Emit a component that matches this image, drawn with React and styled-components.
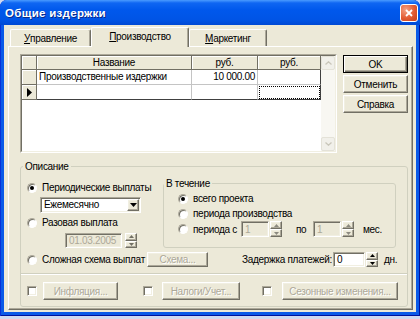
import React from "react";
import styled, { createGlobalStyle, css } from "styled-components";

const tabs = [
  { key: "У", rest: "правление", width: 81 },
  { key: "П", rest: "роизводство", width: 98, active: true },
  { key: "М", rest: "аркетинг", width: 78 },
];

const columns = [
  { title: "Название", align: "left" },
  { title: "руб.", align: "right" },
  { title: "руб.", align: "right" },
];

const rows = [
  { cells: ["Производственные издержки", "10 000.00", ""] },
  { cells: ["", "", ""], current: true },
];

const extras = [
  { label: "Инфляция...", offset: 0, gap: 6, width: 75 },
  { label: "Налоги/Учет...", offset: 25, gap: 9, width: 78 },
  { label: "Сезонные изменения...", offset: 22, gap: 10, width: 116 },
];

const Arrow = ({ up, color = "#000", w = 5, h = 3 }) => (
  <svg width={w} height={h} viewBox={`0 0 ${w} ${h}`}>
    <path d={up ? `M${w / 2} 0L${w} ${h}H0z` : `M0 0H${w}L${w / 2} ${h}z`} fill={color} />
  </svg>
);

const Spin = ({ color, height = 15 }) => (
  <SpinBox $height={height}>
    <SpinButton>
      <Arrow up color={color} />
    </SpinButton>
    <SpinButton>
      <Arrow color={color} />
    </SpinButton>
  </SpinBox>
);

const Option = ({ checked, children, indent, height }) => (
  <OptionRow $indent={indent} $height={height}>
    <RadioMark $checked={checked} />
    {children}
  </OptionRow>
);

const App = () => {
  return (
    <>
      <GlobalStyle />
      <Window>
        <TitleBar>
          <Title>Общие издержки</Title>
          <CloseButton>
            <svg width="8" height="8" viewBox="0 0 8 8">
              <path d="M1 1L7 7M7 1L1 7" stroke="#fff" strokeWidth="1.8" />
            </svg>
          </CloseButton>
        </TitleBar>
        <Client>
          <TabRow>
            {tabs.map((tab) => (
              <Tab key={tab.key} $width={tab.width} $active={tab.active}>
                <u>{tab.key}</u>
                {tab.rest}
              </Tab>
            ))}
          </TabRow>
          <TabPanel>
            <TopSection>
              <GridOuter>
                <GridInner>
                  <Table>
                    <HeadCell />
                    {columns.map((col, i) => (
                      <HeadCell key={i}>{col.title}</HeadCell>
                    ))}
                    {rows.map((row, r) => (
                      <React.Fragment key={r}>
                        <HeadCell>
                          {row.current && (
                            <svg width="5" height="9" viewBox="0 0 5 9">
                              <path d="M0 0L5 4.5L0 9z" fill="#000" />
                            </svg>
                          )}
                        </HeadCell>
                        {row.cells.map((value, c) => (
                          <DataCell
                            key={c}
                            $align={columns[c].align}
                            $lastRow={r === rows.length - 1}
                            $lastCol={c === row.cells.length - 1}
                            $focus={row.current && c === row.cells.length - 1}
                          >
                            {value}
                          </DataCell>
                        ))}
                      </React.Fragment>
                    ))}
                  </Table>
                  <ScrollBar>
                    <ScrollButton>
                      <svg width="7" height="4" viewBox="0 0 7 4">
                        <path d="M0.5 3.5L3.5 0.8L6.5 3.5" stroke="#c9c6ba" strokeWidth="1.3" fill="none" />
                      </svg>
                    </ScrollButton>
                    <ScrollButton>
                      <svg width="7" height="4" viewBox="0 0 7 4">
                        <path d="M0.5 0.5L3.5 3.2L6.5 0.5" stroke="#c9c6ba" strokeWidth="1.3" fill="none" />
                      </svg>
                    </ScrollButton>
                  </ScrollBar>
                </GridInner>
              </GridOuter>
              <ButtonColumn>
                <PushButton $default>OK</PushButton>
                <PushButton>Отменить</PushButton>
                <PushButton>Справка</PushButton>
              </ButtonColumn>
            </TopSection>

            <GroupBox>
              <Legend $offset={2}>Описание</Legend>
              <GroupRow>
                <LeftColumn>
                  <Option checked indent={6}>
                    Периодические выплаты
                  </Option>
                  <Combo>
                    <ComboText>Ежемесячно</ComboText>
                    <ComboButton>
                      <Arrow w={7} h={4} />
                    </ComboButton>
                  </Combo>
                  <Option indent={6}>Разовая выплата</Option>
                  <DateRow>
                    <Field $width={57} $disabled>
                      01.03.2005
                    </Field>
                    <Spin color="#716f64" />
                  </DateRow>
                </LeftColumn>
                <InnerGroup>
                  <Legend $offset={0}>В течение</Legend>
                  <Option checked indent={14}>
                    всего проекта
                  </Option>
                  <Option indent={14}>периода производства</Option>
                  <Option indent={14} height={16}>
                    <Label $width={48}>периода с</Label>
                    <Field $width={28} $disabled>
                      1
                    </Field>
                    <Spin color="#8c8a80" height={16} />
                    <Label $width={17} $gap={14}>
                      по
                    </Label>
                    <Field $width={28} $disabled>
                      1
                    </Field>
                    <Spin color="#8c8a80" height={16} />
                    <Label $gap={9}>мес.</Label>
                  </Option>
                </InnerGroup>
              </GroupRow>

              <BottomRow>
                <RadioMark />
                <Label $width={105}>Сложная схема выплат</Label>
                <PushButton $width={61} $height={15} $disabled>
                  Схема...
                </PushButton>
                <Label $width={91} $gap={34}>
                  Задержка платежей:
                </Label>
                <Field $width={32}>0</Field>
                <Spin />
                <Label $gap={6}>дн.</Label>
              </BottomRow>

              <Divider />

              <CheckRow>
                {extras.map((item) => (
                  <CheckItem key={item.label} $offset={item.offset} $gap={item.gap}>
                    <CheckMark />
                    <PushButton $width={item.width} $disabled>
                      {item.label}
                    </PushButton>
                  </CheckItem>
                ))}
              </CheckRow>
            </GroupBox>
          </TabPanel>
        </Client>
      </Window>
    </>
  );
};

export default App;

const GlobalStyle = createGlobalStyle`
  body {
    margin: 0;
    background: #cfd9f1;
    font-family: "Liberation Sans", Arial, sans-serif;
    font-size: 10px;
    letter-spacing: -0.3px;
    color: #000;
  }
  * {
    box-sizing: border-box;
  }
`;

const raised = css`
  border: 1px solid;
  border-color: #fff #716f64 #716f64 #fff;
  box-shadow: inset -1px -1px #aca899, inset 1px 1px #f1efe2;
`;

const sunken = css`
  border: 1px solid;
  border-color: #aca899 #fff #fff #aca899;
  box-shadow: inset 1px 1px #716f64, inset -1px -1px #f1efe2;
`;

const Window = styled.div`
  width: 420px;
  height: 316px;
  display: flex;
  flex-direction: column;
  background: #0a5ae8;
  border-radius: 7px 7px 0 0;
  box-shadow: inset 1px 0 #0831d9, inset -1px 0 #00139c, inset 0 -1px #00139c;
  overflow: hidden;
`;

const TitleBar = styled.div`
  flex: none;
  height: 25px;
  display: flex;
  align-items: center;
  justify-content: space-between;
  padding: 0 2px 0 5px;
  background: linear-gradient(#4a9bff 0%, #0f66f2 12%, #0058ec 40%, #0054e5 80%, #0049d4 100%);
`;

const Title = styled.span`
  color: #fff;
  font-weight: bold;
  font-size: 11.5px;
  letter-spacing: 0.3px;
  text-shadow: 1px 1px #0a2a8a;
`;

const CloseButton = styled.div`
  width: 18px;
  height: 18px;
  border: 1px solid #fff;
  border-radius: 3px;
  background: radial-gradient(circle at 30% 30%, #f4a184, #e25a32 55%, #c2401c);
  display: flex;
  align-items: center;
  justify-content: center;
`;

const Client = styled.div`
  flex: 1;
  margin: 0 4px 4px;
  padding: 2px 3px 2px 4px;
  background: #ece9d8;
  display: flex;
  flex-direction: column;
`;

const TabRow = styled.div`
  flex: none;
  height: 19px;
  display: flex;
  align-items: flex-end;
  padding-left: 2px;
`;

const Tab = styled.div`
  position: relative;
  z-index: ${(p) => (p.$active ? 1 : 0)};
  width: ${(p) => p.$width}px;
  height: ${(p) => (p.$active ? 20 : 17)}px;
  margin-bottom: ${(p) => (p.$active ? -1 : 0)}px;
  padding-bottom: ${(p) => (p.$active ? 2 : 0)}px;
  background: #ece9d8;
  border: 1px solid;
  border-color: #fff #716f64 transparent #fff;
  border-bottom: none;
  border-radius: 2px 2px 0 0;
  box-shadow: inset -1px 0 #aca899;
  display: flex;
  align-items: center;
  justify-content: center;
`;

const TabPanel = styled.div`
  flex: 1;
  display: flex;
  flex-direction: column;
  padding: 7px 4px 2px 11px;
  border: 1px solid;
  border-color: #fff #716f64 #716f64 #fff;
  box-shadow: inset -1px -1px #aca899;
`;

const TopSection = styled.div`
  flex: none;
  height: 99px;
  display: flex;
`;

const GridOuter = styled.div`
  width: 317px;
  height: 99px;
  border: 1px solid;
  border-color: #aca899 #fff #fff #aca899;
`;

const GridInner = styled.div`
  height: 100%;
  display: flex;
  background: #fff;
  border: 1px solid;
  border-color: #716f64 #f1efe2 #f1efe2 #716f64;
`;

const Table = styled.div`
  width: 299px;
  display: grid;
  grid-template-columns: 15px 155px 66px 63px;
  grid-template-rows: 14px;
  grid-auto-rows: 15px;
  align-content: start;
`;

const HeadCell = styled.div`
  background: #ece9d8;
  border-right: 1px solid #716f64;
  border-bottom: 1px solid #716f64;
  box-shadow: inset 1px 1px #fff;
  display: flex;
  align-items: center;
  justify-content: center;
  line-height: 13px;
  white-space: nowrap;
  overflow: hidden;
`;

const DataCell = styled.div`
  border-right: 1px solid ${(p) => (p.$lastCol ? "#404040" : "#c4c4c4")};
  border-bottom: 1px solid ${(p) => (p.$lastRow ? "#404040" : "#c4c4c4")};
  padding: 0 2px;
  line-height: 14px;
  text-align: ${(p) => p.$align};
  white-space: nowrap;
  overflow: hidden;
  outline: ${(p) => (p.$focus ? "1px dotted #000" : "none")};
  outline-offset: -2px;
`;

const ScrollBar = styled.div`
  width: 14px;
  margin-left: auto;
  display: flex;
  flex-direction: column;
  justify-content: space-between;
  background: #f8f7f2;
`;

const ScrollButton = styled.div`
  height: 14px;
  background: #f1f0ea;
  border: 1px solid #e4e2d8;
  border-radius: 2px;
  display: flex;
  align-items: center;
  justify-content: center;
`;

const ButtonColumn = styled.div`
  width: 65px;
  margin: 1px 0 0 6px;
  display: flex;
  flex-direction: column;
  gap: 2px;
`;

const PushButton = styled.div`
  flex: none;
  width: ${(p) => (p.$width ? `${p.$width}px` : "auto")};
  height: ${(p) => p.$height || 18}px;
  background: #ece9d8;
  ${raised}
  ${(p) =>
    p.$default &&
    css`
      border: 1px solid #000;
      box-shadow: inset 1px 1px #fff, inset -1px -1px #716f64, inset -2px -2px #aca899;
    `}
  display: flex;
  align-items: center;
  justify-content: center;
  white-space: nowrap;
  color: ${(p) => (p.$disabled ? "#aca899" : "#000")};
  text-shadow: ${(p) => (p.$disabled ? "1px 1px #fff" : "none")};
`;

const GroupBox = styled.fieldset`
  flex: none;
  margin: 7px 0 0;
  padding: 0 0 6px;
  min-width: 0;
  border: 1px solid #d0d0bf;
  border-radius: 3px;
`;

const Legend = styled.legend`
  margin-left: ${(p) => p.$offset}px;
  padding: 0 2px;
  line-height: 13px;
`;

const GroupRow = styled.div`
  display: flex;
  margin-top: 4px;
`;

const LeftColumn = styled.div`
  flex: none;
  width: 142px;
  padding-top: 3px;
  display: flex;
  flex-direction: column;
  gap: 2px;
`;

const OptionRow = styled.div`
  flex: none;
  height: ${(p) => p.$height || 15}px;
  display: flex;
  align-items: center;
  padding-left: ${(p) => p.$indent}px;
  white-space: nowrap;
`;

const RadioMark = styled.span`
  position: relative;
  flex: none;
  width: 10px;
  height: 10px;
  margin-right: 5px;
  border-radius: 50%;
  background: #fff;
  border: 1px solid;
  border-color: #aca899 #fff #fff #aca899;
  box-shadow: inset 1px 1px #716f64;

  &::after {
    content: "";
    display: ${(p) => (p.$checked ? "block" : "none")};
    position: absolute;
    left: 2px;
    top: 2px;
    width: 4px;
    height: 4px;
    border-radius: 50%;
    background: #000;
  }
`;

const CheckMark = styled.span`
  flex: none;
  width: 10px;
  height: 10px;
  background: #fff;
  ${sunken}
`;

const Combo = styled.div`
  width: 101px;
  height: 16px;
  margin-left: 19px;
  padding: 1px;
  display: flex;
  background: #fff;
  ${sunken}
`;

const ComboText = styled.span`
  flex: 1;
  padding-left: 2px;
  line-height: 12px;
`;

const ComboButton = styled.span`
  width: 12px;
  background: #ece9d8;
  ${raised}
  display: flex;
  align-items: center;
  justify-content: center;
`;

const DateRow = styled.div`
  height: 15px;
  margin: 1px 0 0 44px;
  display: flex;
  gap: 2px;
`;

const Field = styled.span`
  flex: none;
  width: ${(p) => p.$width}px;
  height: 100%;
  padding-left: 3px;
  display: flex;
  align-items: center;
  background: ${(p) => (p.$disabled ? "#ece9d8" : "#fff")};
  color: ${(p) => (p.$disabled ? "#aca899" : "#000")};
  ${sunken}
`;

const SpinBox = styled.span`
  flex: none;
  width: 12px;
  height: ${(p) => p.$height}px;
  margin-left: 1px;
  display: flex;
  flex-direction: column;
`;

const SpinButton = styled.span`
  flex: 1;
  background: #ece9d8;
  ${raised}
  display: flex;
  align-items: center;
  justify-content: center;
`;

const InnerGroup = styled.fieldset`
  flex: none;
  width: 233px;
  margin: 0;
  padding: 1px 0 5px;
  min-width: 0;
  border: 1px solid #d0d0bf;
  border-radius: 3px;
`;

const Label = styled.span`
  flex: none;
  width: ${(p) => (p.$width ? `${p.$width}px` : "auto")};
  margin-left: ${(p) => p.$gap || 0}px;
  white-space: nowrap;
`;

const BottomRow = styled.div`
  height: 15px;
  margin-top: 4px;
  padding-left: 6px;
  display: flex;
  align-items: center;
`;

const Divider = styled.div`
  margin-top: 6px;
  border-top: 1px solid #d0d0bf;
  border-bottom: 1px solid #fff;
`;

const CheckRow = styled.div`
  height: 18px;
  margin-top: 7px;
  padding-left: 6px;
  display: flex;
  align-items: center;
`;

const CheckItem = styled.div`
  display: flex;
  align-items: center;
  gap: ${(p) => p.$gap}px;
  margin-left: ${(p) => p.$offset}px;
`;
